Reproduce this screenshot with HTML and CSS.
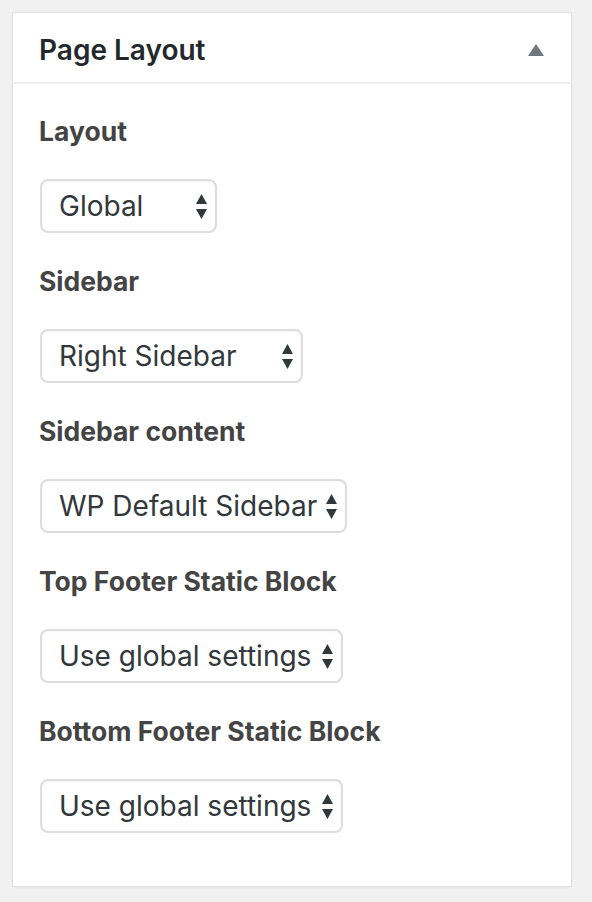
FILE: index.html
```html
<!DOCTYPE html>
<html lang="en">
<head>
<meta charset="utf-8">
<title>Page Layout</title>
<link rel="stylesheet" href="styles.css">
</head>
<body>
<div class="postbox">
  <div class="postbox-header">
    <h2 class="postbox-title">Page Layout</h2>
    <svg class="toggle" width="16" height="12" viewBox="0 0 16 12"><polygon points="8,0 16,12 0,12" fill="#72777c"/></svg>
  </div>
  <div class="inside">
    <div class="field">
      <div class="label">Layout</div>
      <div class="select w-layout"><span>Global</span>
        <svg class="arrows" width="11" height="25" viewBox="0 0 11 25"><polygon points="5.5,0 11,10 0,10"/><polygon points="0,15 11,15 5.5,25"/></svg>
      </div>
    </div>
    <div class="field">
      <div class="label">Sidebar</div>
      <div class="select w-sidebar"><span>Right Sidebar</span>
        <svg class="arrows" width="11" height="25" viewBox="0 0 11 25"><polygon points="5.5,0 11,10 0,10"/><polygon points="0,15 11,15 5.5,25"/></svg>
      </div>
    </div>
    <div class="field">
      <div class="label">Sidebar content</div>
      <div class="select w-content"><span>WP Default Sidebar</span>
        <svg class="arrows" width="11" height="25" viewBox="0 0 11 25"><polygon points="5.5,0 11,10 0,10"/><polygon points="0,15 11,15 5.5,25"/></svg>
      </div>
    </div>
    <div class="field">
      <div class="label">Top Footer Static Block</div>
      <div class="select w-footer"><span>Use global settings</span>
        <svg class="arrows" width="11" height="25" viewBox="0 0 11 25"><polygon points="5.5,0 11,10 0,10"/><polygon points="0,15 11,15 5.5,25"/></svg>
      </div>
    </div>
    <div class="field">
      <div class="label">Bottom Footer Static Block</div>
      <div class="select w-footer"><span>Use global settings</span>
        <svg class="arrows" width="11" height="25" viewBox="0 0 11 25"><polygon points="5.5,0 11,10 0,10"/><polygon points="0,15 11,15 5.5,25"/></svg>
      </div>
    </div>
  </div>
</div>
</body>
</html>
```
FILE: styles.css
```css
html, body {
  margin: 0;
  padding: 0;
  background: #f1f1f1;
}
body {
  padding: 12px;
  font-family: Inter, "Noto Sans", sans-serif;
}
.postbox {
  width: 560px;
  box-sizing: border-box;
  background: #fff;
  border: 1px solid #e2e2e2;
  box-shadow: 0 1px 2px rgba(0,0,0,0.05);
}
.postbox-header {
  height: 71px;
  display: flex;
  align-items: center;
  justify-content: space-between;
  padding: 5px 27px 0 26px;
  box-sizing: border-box;
  border-bottom: 2px solid #eeeeee;
}
.postbox-title {
  margin: 0;
  font-size: 28px;
  font-weight: 600;
  color: #23282d;
}
.toggle {
  display: block;
}
.inside {
  padding: 29px 26px 53px 26px;
  display: flex;
  flex-direction: column;
  gap: 30px;
}
.field {
  display: flex;
  flex-direction: column;
  align-items: flex-start;
  gap: 30px;
}
.label {
  font-size: 26.5px;
  line-height: 36px;
  font-weight: 700;
  color: #444;
}
.select {
  height: 54px;
  box-sizing: border-box;
  margin-left: 1px;
  border: 2px solid #dddddd;
  border-radius: 8px;
  display: flex;
  align-items: center;
  justify-content: space-between;
  padding: 0 8px 0 17px;
  font-size: 28px;
  color: #32373c;
  box-shadow: inset 0 1px 2px rgba(0,0,0,0.04);
}
.arrows {
  display: block;
  fill: #32373c;
}
.w-layout { width: 177px; }
.w-sidebar { width: 263px; }
.w-content { width: 307px; }
.w-footer { width: 303px; }
```
